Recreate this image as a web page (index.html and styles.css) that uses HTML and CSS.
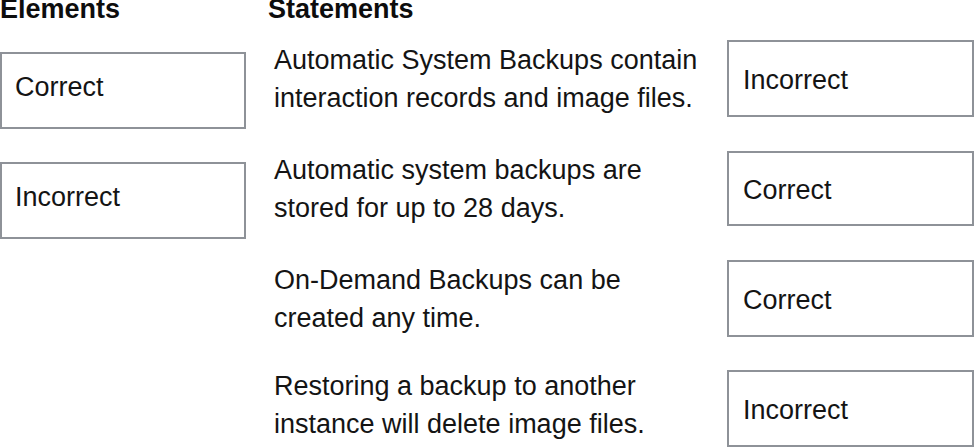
FILE: index.html
```html
<!DOCTYPE html>
<html>
<head>
<meta charset="utf-8">
<link rel="stylesheet" href="styles.css">
</head>
<body>
<div class="page">
  <div class="elements">
    <h2 class="heading">Elements</h2>
    <div class="pool">
      <div class="box">Correct</div>
      <div class="box">Incorrect</div>
    </div>
  </div>
  <div class="statements">
    <h2 class="heading">Statements</h2>
    <div class="rows">
      <div class="row r1">
        <p class="stmt">Automatic System Backups contain<br>interaction records and image files.</p>
        <div class="box">Incorrect</div>
      </div>
      <div class="row r2">
        <p class="stmt">Automatic system backups are<br>stored for up to 28 days.</p>
        <div class="box">Correct</div>
      </div>
      <div class="row r3">
        <p class="stmt">On-Demand Backups can be<br>created any time.</p>
        <div class="box">Correct</div>
      </div>
      <div class="row r4">
        <p class="stmt">Restoring a backup to another<br>instance will delete image files.</p>
        <div class="box">Incorrect</div>
      </div>
    </div>
  </div>
</div>
</body>
</html>
```
FILE: styles.css
```css
html, body {
  margin: 0;
  padding: 0;
  background: #ffffff;
}
body {
  font-family: "Liberation Sans", Arial, sans-serif;
  color: #111111;
  width: 974px;
  height: 447px;
  overflow: hidden;
}
.page {
  display: grid;
  grid-template-columns: 246px 706px;
  column-gap: 22px;
}
.heading {
  margin: 0;
  padding: 0 0 21px 0;
  font-size: 27px;
  font-weight: bold;
  line-height: 19px;
  color: #0d0d0d;
}
.pool {
  display: flex;
  flex-direction: column;
  gap: 33px;
  padding-top: 12px;
}
.box {
  box-sizing: border-box;
  height: 77px;
  border: 2px solid #8e9298;
  display: flex;
  align-items: center;
  padding-left: 13px;
  font-size: 27px;
  line-height: 30px;
  color: #141414;
}
.pool .box {
  padding-bottom: 8px;
}
.rows {
  display: flex;
  flex-direction: column;
  gap: 33px;
}
.row {
  display: grid;
  grid-template-columns: 459px 247px;
  grid-template-rows: 77px;
  align-items: center;
}
.row .box {
  padding-left: 14px;
  padding-top: 2px;
}
.r2 .box { height: 75px; }
.stmt {
  margin: 0;
  padding-left: 6px;
  font-size: 27px;
  line-height: 38px;
  color: #141414;
}
.r4 .stmt { margin: -4px 0 4px 0; }
```
